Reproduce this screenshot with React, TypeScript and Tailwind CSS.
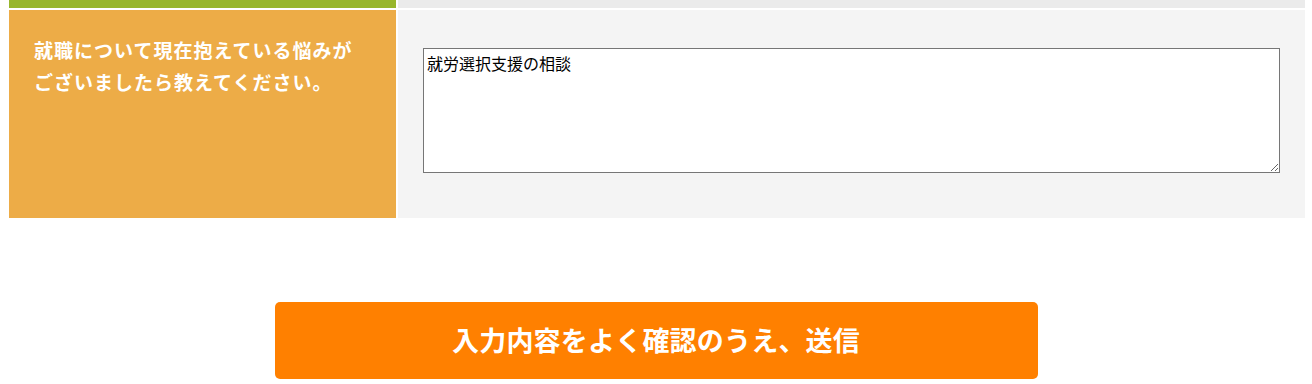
import { useState } from 'react';

const font = { fontFamily: '"Noto Sans CJK JP", "Noto Sans", sans-serif' };

export default function App() {
  const [worry, setWorry] = useState('就労選択支援の相談');

  return (
    <div className="min-h-screen bg-white" style={font}>
      {/* Form table */}
      <div className="grid grid-cols-[387px_1fr] gap-[2px] pl-[9px] pr-[7px]">
        <div className="h-[8px] bg-[#98b62c]" />
        <div className="h-[8px] bg-[#ebebeb]" />

        <div className="bg-[#edac47] px-[25px] pt-[24px] text-[19px] leading-[32px] font-bold tracking-[1px] text-white">
          就職について現在抱えている悩みが
          <br />
          ございましたら教えてください。
        </div>
        <div className="bg-[#f4f4f4] pl-[25px] pr-[25px] pt-[38px] pb-[45px]">
          <textarea
            value={worry}
            onChange={e => setWorry(e.target.value)}
            className="block h-[125px] w-full border border-[#767676] bg-white px-[3px] py-[4px] text-[16px] leading-[20px] text-black"
            style={font}
          />
        </div>
      </div>

      {/* Submit */}
      <div className="flex justify-center pt-[84px]">
        <button className="h-[77px] w-[763px] rounded-[5px] bg-[#ff8000] text-[27px] font-bold tracking-[0.2px] text-white">
          入力内容をよく確認のうえ、送信
        </button>
      </div>
    </div>
  );
}
